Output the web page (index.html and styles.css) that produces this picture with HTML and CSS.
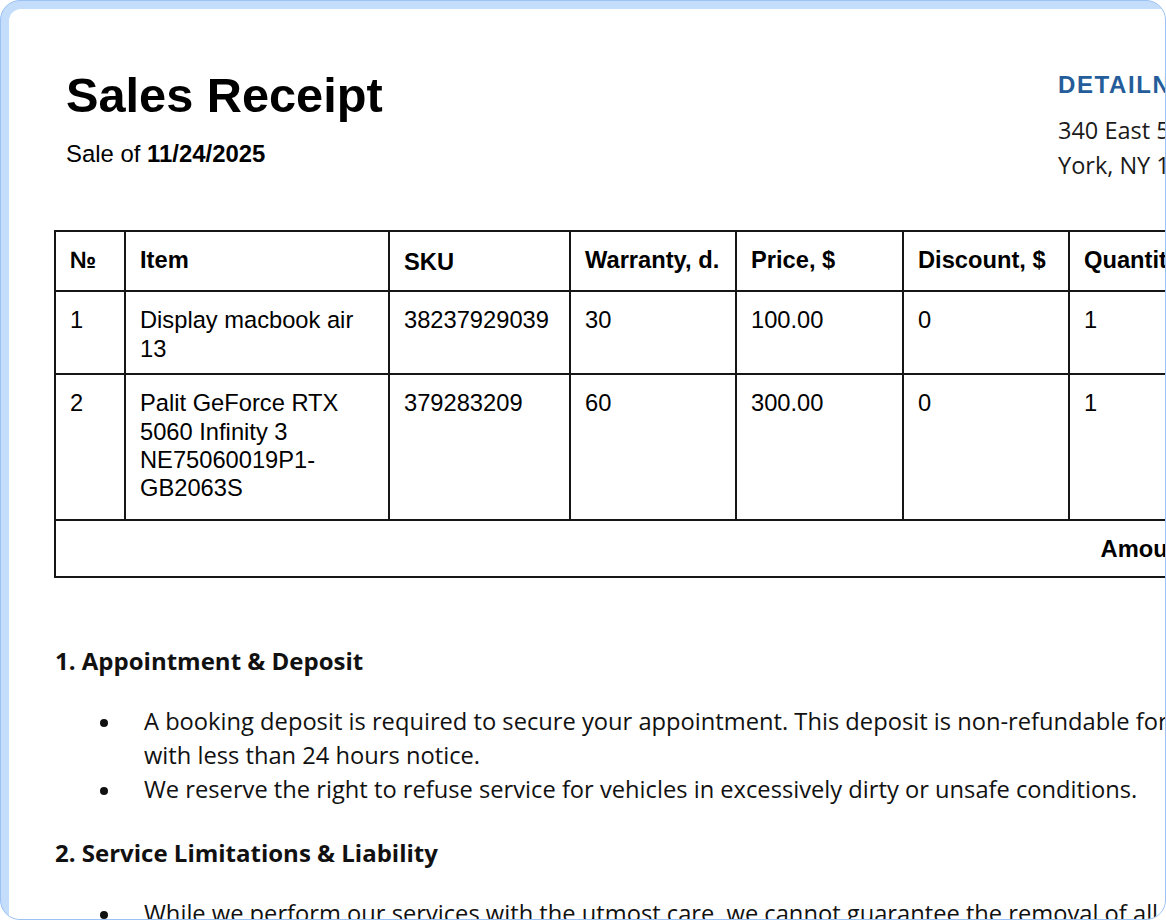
FILE: index.html
```html
<!DOCTYPE html>
<html lang="en">
<head>
<meta charset="utf-8">
<title>Sales Receipt</title>
<link rel="stylesheet" href="styles.css">
</head>
<body>
<div class="frame">
  <div class="sheet">
    <div class="doc">
      <header class="doc-header">
        <div class="doc-title">
          <h1 class="title">Sales Receipt</h1>
          <p class="subtitle">Sale of <b>11/24/2025</b></p>
        </div>
        <div class="company">
          <div class="company-name">DETAILNYC</div>
          <div class="company-address">340 East 57th Street, New<br>York, NY 10022</div>
        </div>
      </header>

      <table class="items">
        <colgroup>
          <col class="c-num"><col class="c-item"><col class="c-sku"><col class="c-war">
          <col class="c-price"><col class="c-disc"><col class="c-qty"><col class="c-sum">
        </colgroup>
        <thead>
          <tr class="row-head">
            <th>№</th><th>Item</th><th class="th-low">SKU</th><th>Warranty, d.</th>
            <th>Price, $</th><th>Discount, $</th><th>Quantity</th><th>Sum, $</th>
          </tr>
        </thead>
        <tbody>
          <tr class="row-1">
            <td>1</td><td>Display macbook air 13</td><td>38237929039</td><td>30</td>
            <td>100.00</td><td>0</td><td>1</td><td>100.00</td>
          </tr>
          <tr class="row-2">
            <td>2</td><td>Palit GeForce RTX 5060 Infinity 3 NE75060019P1-GB2063S</td><td>379283209</td><td>60</td>
            <td>300.00</td><td>0</td><td>1</td><td>300.00</td>
          </tr>
          <tr class="row-total">
            <td colspan="8" class="total">Amount: 400.00</td>
          </tr>
        </tbody>
      </table>

      <section class="terms">
        <h3 class="term-title">1. Appointment &amp; Deposit</h3>
        <ul class="term-list">
          <li>A booking deposit is required to secure your appointment. This deposit is non-refundable for cancellations made with less than 24 hours notice.</li>
          <li>We reserve the right to refuse service for vehicles in excessively dirty or unsafe conditions.</li>
        </ul>
        <h3 class="term-title">2. Service Limitations &amp; Liability</h3>
        <ul class="term-list">
          <li>While we perform our services with the utmost care, we cannot guarantee the removal of all stains, scratches or odors.</li>
        </ul>
      </section>
    </div>
  </div>
</div>
</body>
</html>
```

FILE: styles.css
```css
html, body {
  margin: 0;
  padding: 0;
  background: #ffffff;
}

.frame {
  box-sizing: border-box;
  width: 1166px;
  height: 920px;
  border: 1.5px solid #9bc2f3;
  border-radius: 20px;
  background: #c4ddfb;
  overflow: hidden;
  padding: 8px 0 0 8px;
}

.sheet {
  height: 100%;
  background: #ffffff;
  border-top-left-radius: 12px;
  overflow: hidden;
}

.doc {
  width: 1400px;
  padding: 58px 0 0 45px;
  color: #111;
}

.doc-header {
  display: flex;
  align-items: flex-start;
}

.doc-title {
  flex: 1;
  padding-left: 12px;
}

.title {
  margin: 0;
  font-family: "Liberation Sans", Arial, sans-serif;
  font-weight: bold;
  font-size: 48.7px;
  line-height: 56px;
  color: #000;
}

.subtitle {
  margin: 17px 0 0;
  font-family: "Liberation Sans", Arial, sans-serif;
  font-size: 23.9px;
  line-height: 28px;
  color: #000;
}

.company {
  width: 396px;
  margin-top: 4px;
}

.company-name {
  font-family: "Liberation Sans", Arial, sans-serif;
  font-weight: bold;
  font-size: 24px;
  letter-spacing: 1.6px;
  line-height: 28px;
  color: #245d99;
}

.company-address {
  margin-top: 14px;
  font-family: "Open Sans", "Noto Sans", sans-serif;
  font-size: 23.5px;
  line-height: 35px;
  color: #1a1a1a;
  white-space: nowrap;
}

.items {
  margin-top: 47px;
  width: 1346px;
  table-layout: fixed;
  border-collapse: collapse;
  border: 2px solid #161616;
  font-family: "Liberation Sans", Arial, sans-serif;
  font-size: 23.7px;
  line-height: 28.3px;
  color: #000;
}

.c-num { width: 70px; }
.c-item { width: 264px; }
.c-sku { width: 181px; }
.c-war { width: 166px; }
.c-price { width: 167px; }
.c-disc { width: 166px; }
.c-qty { width: 166px; }
.c-sum { width: 166px; }

.items th,
.items td {
  border: 2px solid #161616;
  padding: 14px 14px 8px;
  text-align: left;
  vertical-align: top;
}

.items th {
  font-weight: bold;
  vertical-align: middle;
  padding: 12px 14px 14px;
}

.items th.th-low {
  padding-top: 16px;
}

.row-head { height: 59px; }
.row-1 { height: 83px; }
.row-2 { height: 146px; }
.row-total { height: 57px; }

.items td.total {
  text-align: right;
  vertical-align: middle;
  font-weight: bold;
  padding: 13px 123px 13px 14px;
}

.terms {
  margin-top: 66px;
  font-family: "Open Sans", "Noto Sans", sans-serif;
  color: #111;
}

.term-title {
  margin: 0 0 0 1px;
  font-size: 24px;
  font-weight: bold;
  line-height: 34px;
}

.term-list {
  list-style: none;
  margin: 26px 0 30px;
  padding: 0 0 0 90px;
  font-size: 23.7px;
  line-height: 34px;
  width: 1265px;
}

.term-list li::before {
  content: "";
  display: inline-block;
  width: 8px;
  height: 8px;
  border-radius: 50%;
  background: #111;
  margin-left: -44px;
  margin-right: 36px;
  vertical-align: 3px;
}
```
